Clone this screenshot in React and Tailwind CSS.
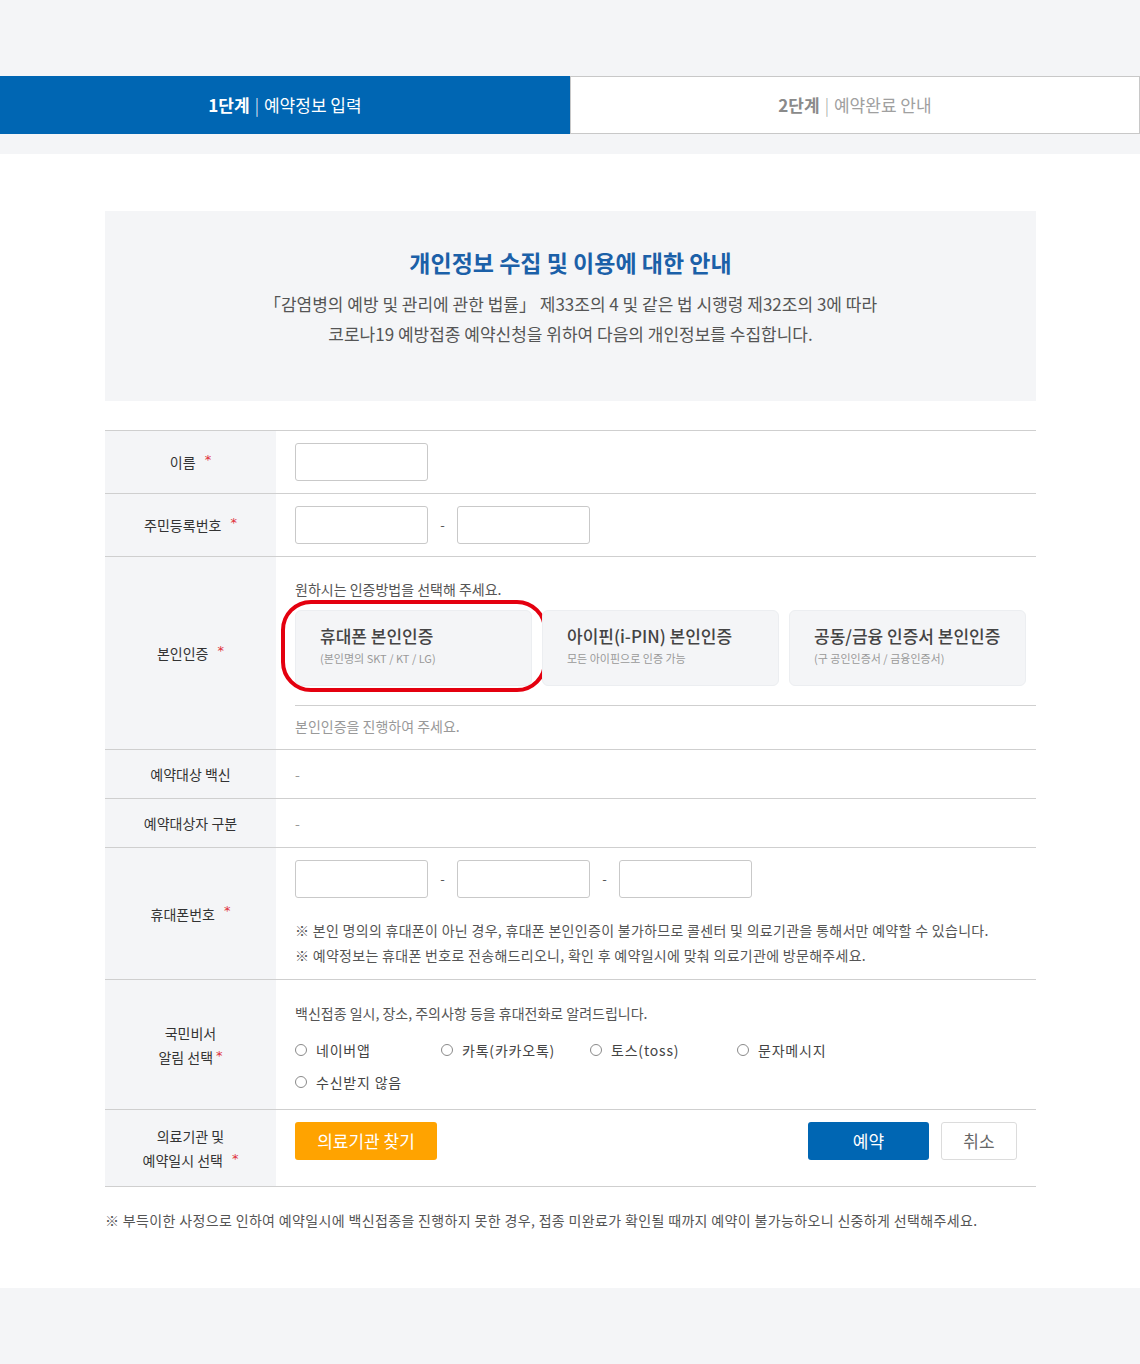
import React from "react";

const FONT = { fontFamily: '"Noto Sans CJK KR", "Noto Sans", sans-serif' };

function Star({ ml = "ml-[9px]" }) {
  return (
    <span
      className={`${ml} inline-block relative -top-[3px] text-[13px] leading-none italic text-[#e0303a]`}
      style={{ fontFamily: '"DejaVu Sans", sans-serif' }}
    >
      *
    </span>
  );
}

function Row({ label, children, className = "" }) {
  return (
    <div className="flex border-t border-[#cfcfcf]">
      <div className="w-[171px] shrink-0 bg-[#f4f5f7] flex items-center justify-center text-center text-[14px] leading-[24px] text-[#333]">
        {label}
      </div>
      <div className={`flex-1 pl-[19px] text-[14px] text-[#555] ${className}`}>{children}</div>
    </div>
  );
}

function Box() {
  return <div className="w-[133px] h-[38px] rounded-[3px] border border-[#c9c9c9] bg-white" />;
}

function Dash() {
  return <span className="w-[29px] text-center text-[#555] text-[13px]">-</span>;
}

function AuthCard({ title, sub, children }) {
  return (
    <div className="relative flex-1 h-[76px] rounded-[6px] border border-[#eceef1] bg-[#f4f5f7] pl-[24px] pt-[13px]">
      <div className="text-[17px] leading-[24px] font-medium text-[#444]">{title}</div>
      <div className="mt-[2px] text-[11px] leading-[16px] text-[#999]">{sub}</div>
      {children}
    </div>
  );
}

function Radio({ label, w = "w-[147px]" }) {
  return (
    <div className={`flex items-center ${w}`}>
      <span className="w-[12px] h-[12px] rounded-full border border-[#8a8a8a] bg-white" />
      <span className="ml-[9px] text-[14px] tracking-[0.8px] text-[#444]">{label}</span>
    </div>
  );
}

export default function App() {
  return (
    <div className="w-full min-h-[1364px] bg-[#f4f5f7]" style={FONT}>
      {/* ===== STEPS ===== */}
      <div className="pt-[76px]">
        <div className="flex h-[58px]">
          <div className="w-1/2 bg-[#0066b3] flex items-center justify-center text-[17px] text-white">
            <span className="font-bold">1단계</span>
            <span className="mx-[5px] font-light">|</span>
            <span>예약정보 입력</span>
          </div>
          <div className="w-1/2 bg-white border border-[#c8c8c8] flex items-center justify-center text-[17px] text-[#a0a0a0]">
            <span className="font-bold text-[#8a8a8a]">2단계</span>
            <span className="mx-[5px] font-light">|</span>
            <span>예약완료 안내</span>
          </div>
        </div>
      </div>

      {/* ===== CONTENT ===== */}
      <div className="mt-[20px] bg-white h-[1134px] pt-[57px]">
        <div className="ml-[105px] w-[931px]">
          <div className="h-[190px] bg-[#f4f5f7] flex flex-col items-center pt-[34px]">
            <h2 className="text-[23px] leading-[34px] font-bold text-[#1b60a8]">개인정보 수집 및 이용에 대한 안내</h2>
            <p className="mt-[10px] text-center text-[17px] leading-[30px] text-[#555]">
              「감염병의 예방 및 관리에 관한 법률」 제33조의 4 및 같은 법 시행령 제32조의 3에 따라
              <br />
              코로나19 예방접종 예약신청을 위하여 다음의 개인정보를 수집합니다.
            </p>
          </div>

          <div className="mt-[29px] border-b border-[#cfcfcf]">
            <Row label={<>이름<Star /></>} className="py-[12px]">
              <Box />
            </Row>

            <Row label={<>주민등록번호<Star /></>} className="py-[12px] flex items-center">
              <Box />
              <Dash />
              <Box />
            </Row>

            <Row label={<>본인인증<Star /></>} className="pt-[22px] pb-[13px]">
              <div className="text-[14px] leading-[20px] text-[#555]">원하시는 인증방법을 선택해 주세요.</div>
              <div className="mt-[11px] mr-[10px] flex gap-[10px]">
                <AuthCard title="휴대폰 본인인증" sub="(본인명의 SKT / KT / LG)">
                  <div className="absolute -left-[15px] -top-[11px] w-[266px] h-[92px] rounded-[30px] border-[4px] border-[#e4000f]" />
                </AuthCard>
                <AuthCard title="아이핀(i-PIN) 본인인증" sub="모든 아이핀으로 인증 가능" />
                <AuthCard title="공동/금융 인증서 본인인증" sub="(구 공인인증서 / 금융인증서)" />
              </div>
              <div className="mt-[19px] border-t border-[#cfcfcf] pt-[10px] text-[14px] leading-[20px] text-[#999]">
                본인인증을 진행하여 주세요.
              </div>
            </Row>

            <Row label="예약대상 백신" className="h-[48px] flex items-center text-[#999]">-</Row>
            <Row label="예약대상자 구분" className="h-[48px] flex items-center text-[#999]">-</Row>

            <Row label={<>휴대폰번호<Star /></>} className="pt-[12px] pb-[11px]">
              <div className="flex items-center">
                <Box />
                <Dash />
                <Box />
                <Dash />
                <Box />
              </div>
              <div className="mt-[20px] text-[14px] leading-[25px] tracking-[0.3px] text-[#555]">
                <p>※ 본인 명의의 휴대폰이 아닌 경우, 휴대폰 본인인증이 불가하므로 콜센터 및 의료기관을 통해서만 예약할 수 있습니다.</p>
                <p>※ 예약정보는 휴대폰 번호로 전송해드리오니, 확인 후 예약일시에 맞춰 의료기관에 방문해주세요.</p>
              </div>
            </Row>

            <Row
              label={
                <div>
                  국민비서
                  <br />
                  알림 선택<Star ml="ml-[3px]" />
                </div>
              }
              className="pt-[22px] pb-[16px]"
            >
              <div className="text-[14px] leading-[22px] text-[#555]">백신접종 일시, 장소, 주의사항 등을 휴대전화로 알려드립니다.</div>
              <div className="mt-[15px] flex items-center h-[22px]">
                <Radio label="네이버앱" w="w-[146px]" />
                <Radio label="카톡(카카오톡)" w="w-[149px]" />
                <Radio label="토스(toss)" />
                <Radio label="문자메시지" />
              </div>
              <div className="mt-[10px] flex items-center h-[22px]">
                <Radio label="수신받지 않음" />
              </div>
            </Row>

            <Row
              label={
                <div>
                  의료기관 및
                  <br />
                  예약일시 선택<Star />
                </div>
              }
              className="h-[76px] flex items-start pt-[12px] pr-[19px]"
            >
              <button className="w-[142px] h-[38px] rounded-[3px] bg-[#ffa300] text-[17px] text-white">의료기관 찾기</button>
              <div className="ml-auto flex items-center gap-[12px]">
                <button className="w-[121px] h-[38px] rounded-[3px] bg-[#0066b3] text-[17px] text-white">예약</button>
                <button className="w-[76px] h-[38px] rounded-[3px] border border-[#dcdcdc] bg-white text-[17px] text-[#666]">취소</button>
              </div>
            </Row>
          </div>

          <p className="mt-[22px] text-[14px] leading-[22px] tracking-[0.35px] text-[#555]">
            ※ 부득이한 사정으로 인하여 예약일시에 백신접종을 진행하지 못한 경우, 접종 미완료가 확인될 때까지 예약이 불가능하오니 신중하게 선택해주세요.
          </p>
        </div>
      </div>
    </div>
  );
}
